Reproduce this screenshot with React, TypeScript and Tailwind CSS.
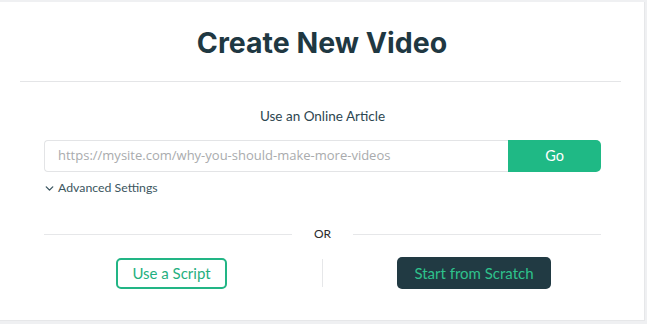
import { ChevronDown } from "lucide-react";

export default function App() {
  return (
    <div className="h-[324px] w-[647px] bg-[#eff0f2] pt-[2px] pr-[2px]">
      <div className="h-[319px] w-[645px] bg-white border-r border-b border-[#e6e7e9] font-['Lato',sans-serif]">
        {/* Header */}
        <div className="h-[79px] flex items-center justify-center pt-[4px]">
          <h1 className="font-['Inter',sans-serif] text-[28.5px] font-bold text-[#1f3842]">
            Create New Video
          </h1>
        </div>
        <div className="mx-[20px] mr-[23px] border-t border-[#e4e5e7]" />

        {/* Online article */}
        <div className="px-[44px] pr-[43px]">
          <p className="mt-[26px] text-center text-[13.5px] text-[#2d4650] leading-[16px]">Use an Online Article</p>
          <div className="mt-[16px] flex h-[32px]">
            <input
              placeholder="https://mysite.com/why-you-should-make-more-videos"
              className="flex-1 rounded-l-[4px] border border-r-0 border-[#e3e4e6] px-[13px] font-['Open_Sans',sans-serif] text-[13px] text-[#333] placeholder:text-[#a9abad] outline-none"
            />
            <button className="w-[93px] rounded-r-[5px] bg-[#1fb985] text-[14.5px] text-white">Go</button>
          </div>
          <button className="mt-[7px] flex items-center gap-[2px] text-[12.3px] text-[#3b5660]">
            <ChevronDown className="h-[13px] w-[13px] -ml-[1px]" strokeWidth={2.5} />
            Advanced Settings
          </button>

          {/* OR divider */}
          <div className="mt-[28px] flex items-center">
            <div className="w-[248px] border-t border-[#e6e7e9]" />
            <span className="flex-1 text-center text-[12px] text-[#2b2b2b]">OR</span>
            <div className="w-[248px] border-t border-[#e6e7e9]" />
          </div>
        </div>

        {/* Choices */}
        <div className="mt-[14px] flex items-center">
          <button className="ml-[116px] h-[31px] w-[111px] rounded-[5px] border-2 border-[#22b585] text-[15px] text-[#1faf80]">
            Use a Script
          </button>
          <div className="ml-[95px] h-[28px] border-l border-[#e6e7e9]" />
          <button className="ml-[74px] h-[32px] w-[154px] rounded-[5px] bg-[#213a43] text-[15px] text-[#2ec28c]">
            Start from Scratch
          </button>
        </div>
      </div>
    </div>
  );
}
